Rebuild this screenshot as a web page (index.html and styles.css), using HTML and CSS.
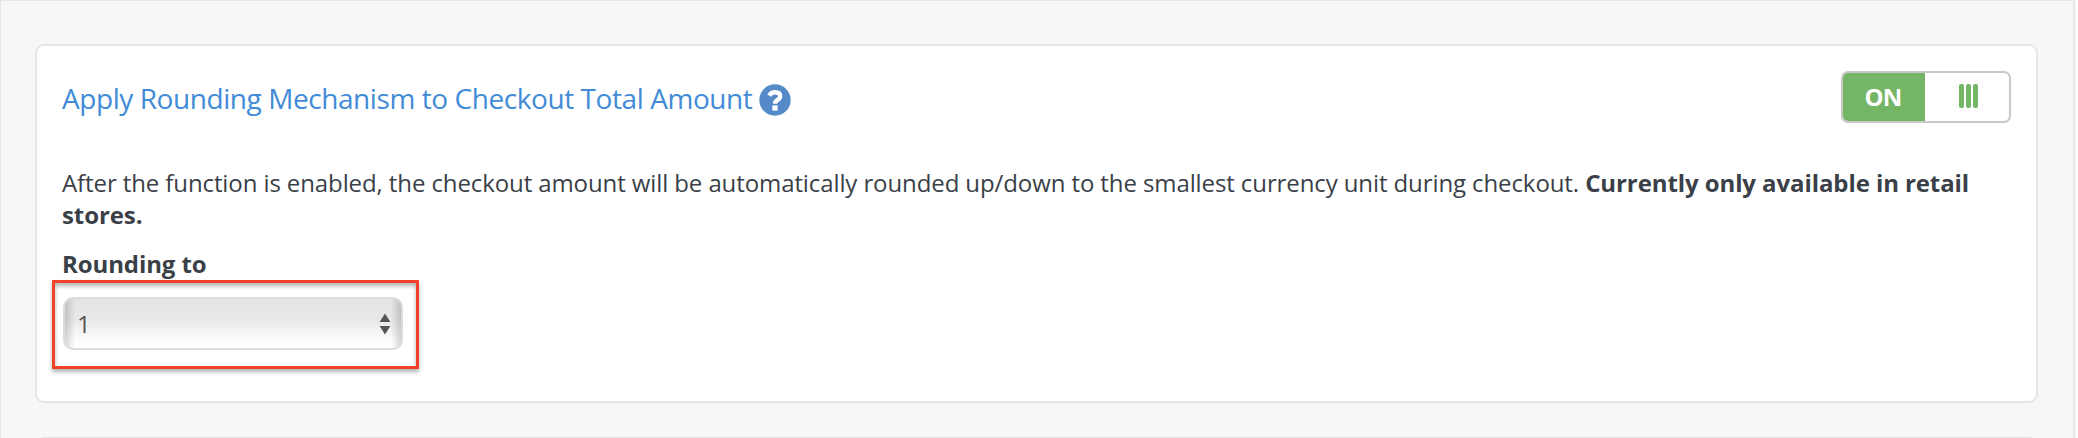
FILE: index.html
```html
<!DOCTYPE html>
<html lang="en">
<head>
    <meta charset="UTF-8">
    <title>Checkout Settings</title>
    <link rel="stylesheet" href="styles.css">
</head>
<body>
    <main class="settings">
        <section class="card">
            <div class="card-header">
                <h2 class="card-title">Apply Rounding Mechanism to Checkout Total Amount</h2>
                <svg class="help-icon" viewBox="0 0 32 32">
                    <circle cx="16" cy="16" r="15.7" fill="#558ac8"/>
                    <path d="M10.2 11.6C11.6 9.2 13.4 8.2 16 8.2c3.2 0 5.2 1.5 5.2 4 0 3.8-5.2 3.6-5.2 7.5" fill="none" stroke="#fff" stroke-width="4.4"/>
                    <rect x="13.4" y="21.4" width="5.2" height="5.2" fill="#fff"/>
                </svg>
                <button class="toggle">
                    <span class="toggle-on">ON</span>
                    <span class="toggle-handle"><i></i><i></i><i></i></span>
                </button>
            </div>
            <p class="description">After the function is enabled, the checkout amount will be automatically rounded up/down to the smallest currency unit during checkout. <strong>Currently only available in retail stores.</strong></p>
            <div class="field-label">Rounding to</div>
            <div class="highlight">
                <div class="select">
                    <span>1</span>
                    <svg class="select-arrows" viewBox="0 0 12 22">
                        <path d="M6 0.5L11.4 9H0.6zM6 21.5L11.4 13H0.6z" fill="#555"/>
                    </svg>
                </div>
            </div>
        </section>
        <section class="card next-card"></section>
    </main>
</body>
</html>
```

FILE: styles.css
```css
* {
    margin: 0;
    padding: 0;
    box-sizing: border-box;
}

body {
    font-family: "Open Sans", sans-serif;
    font-size: 24px;
    line-height: 32px;
    color: #3a3f48;
    background: #fafafa;
}

.settings {
    width: 2075px;
    height: 438px;
    padding: 43px 35px 0 34px;
    background: #f7f7f7;
    border: 1px solid #e7e7e7;
    border-right-width: 2px;
    border-bottom: none;
    overflow: hidden;
}

.card {
    height: 359px;
    padding: 25px;
    background: #fff;
    border: 2px solid #e6e6e6;
    border-radius: 9px;
}

.next-card {
    margin-top: 34px;
}

/* Title row */
.card-header {
    display: flex;
    align-items: center;
    height: 52px;
}

.card-title {
    padding-top: 2px;
    font-size: 28px;
    font-weight: 400;
    letter-spacing: -0.43px;
    color: #428bd7;
}

.help-icon {
    width: 32px;
    height: 32px;
    margin: 5px 0 0 7px;
}

.toggle {
    display: flex;
    width: 170px;
    height: 52px;
    margin-left: auto;
    background: #fff;
    border: 2px solid #c8c8c8;
    border-radius: 7px;
    overflow: hidden;
}

.toggle-on {
    width: 82px;
    padding-right: 2px;
    line-height: 48px;
    font-family: "Open Sans", sans-serif;
    font-size: 24px;
    font-weight: 700;
    letter-spacing: -0.8px;
    color: #fff;
    background: #74b566;
}

.toggle-handle {
    flex: 1;
    display: flex;
    align-items: center;
    justify-content: center;
    gap: 2px;
    padding: 0 0 2px 3px;
}

.toggle-handle i {
    width: 5px;
    height: 24px;
    background: #74b566;
    border-radius: 2px;
}

/* Description and field */
.description {
    margin-top: 44px;
    letter-spacing: -0.1px;
}

.description strong {
    letter-spacing: -0.09px;
}

.field-label {
    margin-top: 17px;
    font-weight: 700;
    letter-spacing: -0.1px;
}

.highlight {
    width: 367px;
    height: 89px;
    margin: 0 0 0 -10px;
    padding: 14px 8px;
    border: 3px solid #ee4328;
    box-shadow: 0 3px 4px rgba(0,0,0,0.3), inset 0 3px 4px rgba(0,0,0,0.3);
}

.select {
    display: flex;
    align-items: center;
    justify-content: space-between;
    width: 340px;
    height: 53px;
    padding: 0 10px 0 12px;
    color: #555;
    background: linear-gradient(to right, rgba(0,0,0,0.16), transparent 10px, transparent calc(100% - 10px), rgba(0,0,0,0.16)),
        linear-gradient(#e4e4e4, #e8e8e8 40%, #fff 92%);
    border: 2px solid #dcdcdc;
    border-radius: 10px;
}

.select-arrows {
    width: 12px;
    height: 22px;
}
```
